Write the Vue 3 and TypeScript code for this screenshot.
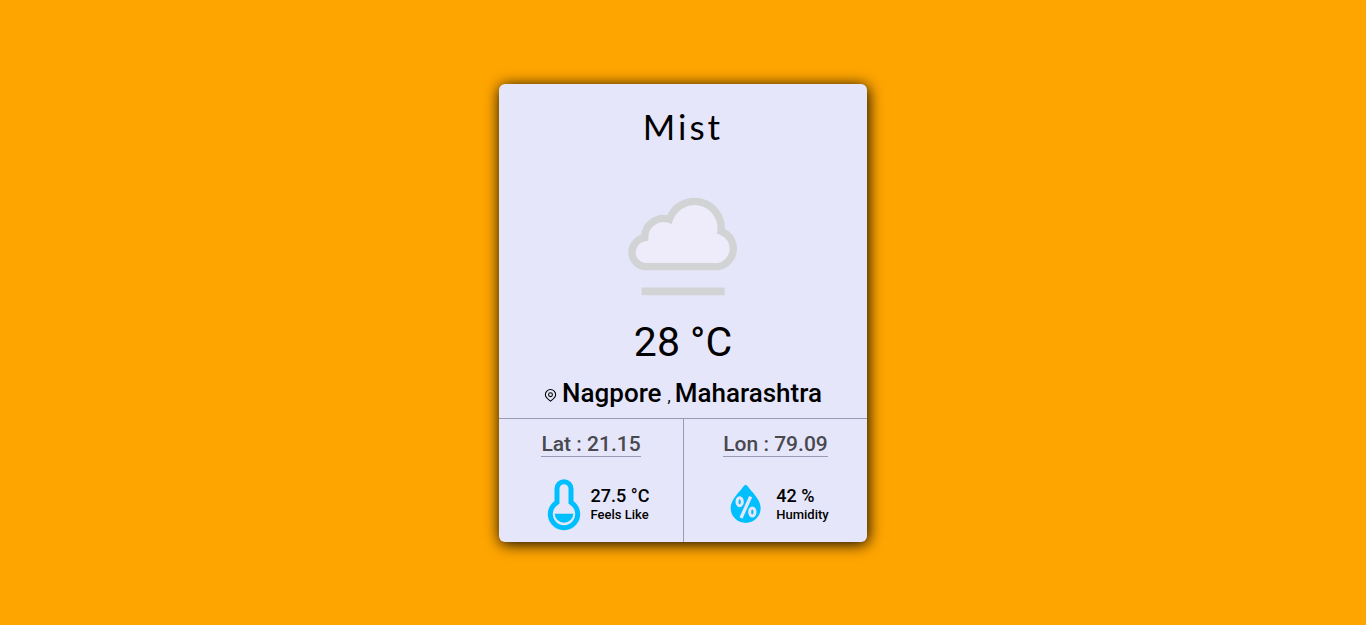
<script setup lang="ts">
interface Weather {
  condition: string
  temperature: number
  city: string
  region: string
  lat: number
  lon: number
  feelsLike: number
  humidity: number
}

const weather: Weather = {
  condition: 'Mist',
  temperature: 28,
  city: 'Nagpore',
  region: 'Maharashtra',
  lat: 21.15,
  lon: 79.09,
  feelsLike: 27.5,
  humidity: 42,
}
</script>

<template>
  <main class="page">
    <article class="card">
      <section class="summary">
        <h1 class="condition">{{ weather.condition }}</h1>
        <svg class="cloud" viewBox="-6 0 450 390" aria-hidden="true">
          <path
            d="M105 260 A43 43 0 0 1 66 217 A45 45 0 0 1 104 173 A57 57 0 0 1 178 118 A80 80 0 0 1 333 154 A55 55 0 0 1 325 260 Z"
            fill="#eeecfa"
            stroke="#d1d3d4"
            stroke-width="22"
          />
          <path d="M95 334 H344" fill="none" stroke="#d1d3d4" stroke-width="23" />
        </svg>
        <p class="temperature">{{ weather.temperature }} °C</p>
        <p class="place">
          <svg class="pin" viewBox="0 0 24 24" aria-hidden="true">
            <path d="M12 22.5 C9 20 2.5 15.500 2.500 10.500 A9.500 9.500 0 0 1 21.500 10.500 C21.500 15.500 15 20 12 22.500 Z" />
            <circle cx="12" cy="10.500" r="3.500" />
          </svg>
          <span class="city">{{ weather.city }}</span>
          <span class="comma">,</span>
          <span class="city">{{ weather.region }}</span>
        </p>
      </section>

      <section class="details">
        <div class="detail">
          <h2 class="coordinate">Lat : {{ weather.lat }}</h2>
          <div class="reading">
            <svg class="thermometer" viewBox="20 24 102 159" aria-hidden="true">
              <path
                d="M50 97 V56 A21 21 0 0 1 92 56 V97 A41 41 0 1 1 50 97 Z"
                fill="none"
                stroke="#00bfff"
                stroke-width="15"
              />
              <path d="M43 131 H99 A28 27 0 0 1 43 131 Z" fill="#00bfff" />
            </svg>
            <p class="values">
              <span class="value">{{ weather.feelsLike }} °C</span>
              <span class="label">Feels Like</span>
            </p>
          </div>
        </div>
        <div class="detail">
          <h2 class="coordinate">Lon : {{ weather.lon }}</h2>
          <div class="reading humidity">
            <svg class="drop" viewBox="28 28 96 120" aria-hidden="true">
              <path
                d="M75 30 C79 30 83 38 88 44 C103 61 120 80 120 100 A45 45 0 0 1 30 100 C30 80 47 61 62 44 C67 38 71 30 75 30 Z"
                fill="#00bfff"
              />
              <g fill="none" stroke="#e6e6fa">
                <ellipse cx="57" cy="81" rx="8" ry="12" stroke-width="9" />
                <ellipse cx="95" cy="112" rx="8" ry="12" stroke-width="9" />
                <path d="M90 66 L61 130" stroke-width="10" />
              </g>
            </svg>
            <p class="values">
              <span class="value">{{ weather.humidity }} %</span>
              <span class="label">Humidity</span>
            </p>
          </div>
        </div>
      </section>
    </article>
  </main>
</template>

<style>
body {
  margin: 0;
}
</style>

<style scoped>
.page {
  box-sizing: border-box;
  min-height: 100vh;
  display: flex;
  align-items: center;
  justify-content: center;
  background: #ffa500;
  color: #000;
  font-family: Roboto, "Liberation Sans", sans-serif;
}

.card {
  width: 368px;
  max-width: 100%;
  border-radius: 6px;
  background: #e6e6fa;
  box-shadow: 1px 2px 15px #000;
}

.summary {
  display: flex;
  flex-direction: column;
  align-items: center;
  padding: 20px 0 5px;
}

.condition {
  margin: 0;
  font-family: Lato, sans-serif;
  font-size: 35px;
  font-weight: 400;
  line-height: 44px;
  letter-spacing: 3px;
}

.cloud {
  width: 150px;
  height: 130px;
  margin-top: 32px;
}

.temperature {
  margin: 8px 0 0;
  font-size: 41px;
  line-height: 48px;
}

.place {
  display: flex;
  align-items: baseline;
  margin: 11px 0 0;
  line-height: 32px;
}

.pin {
  width: 13px;
  height: 13px;
  margin-right: 5px;
  fill: none;
  stroke: #000;
  stroke-width: 2;
}

.city {
  font-size: 26px;
  font-weight: 500;
}

.comma {
  margin: 0 4px 0 6px;
  font-size: 16px;
}

.details {
  display: grid;
  grid-template-columns: 1fr 1fr;
  border-top: 1px solid #9a9ab4;
}

.detail {
  display: flex;
  flex-direction: column;
  align-items: center;
  padding: 13px 0 11px;
}

.detail + .detail {
  border-left: 1px solid #9a9ab4;
}

.coordinate {
  margin: 0;
  border-bottom: 1px solid #9a9ab4;
  color: #48484e;
  font-size: 21px;
  font-weight: 500;
  line-height: 24px;
}

.reading {
  display: flex;
  align-items: center;
  gap: 10px;
  min-height: 53px;
  margin-top: 21px;
  padding-left: 14px;
}

.humidity {
  gap: 14px;
  padding-left: 8px;
}

.thermometer {
  width: 34px;
  height: 53px;
}

.drop {
  width: 32px;
  height: 40px;
}

.values {
  display: flex;
  flex-direction: column;
  margin: 0;
}

.value {
  font-size: 18px;
  font-weight: 500;
  line-height: 22px;
}

.label {
  font-size: 13px;
  font-weight: 500;
  line-height: 16px;
}
</style>
